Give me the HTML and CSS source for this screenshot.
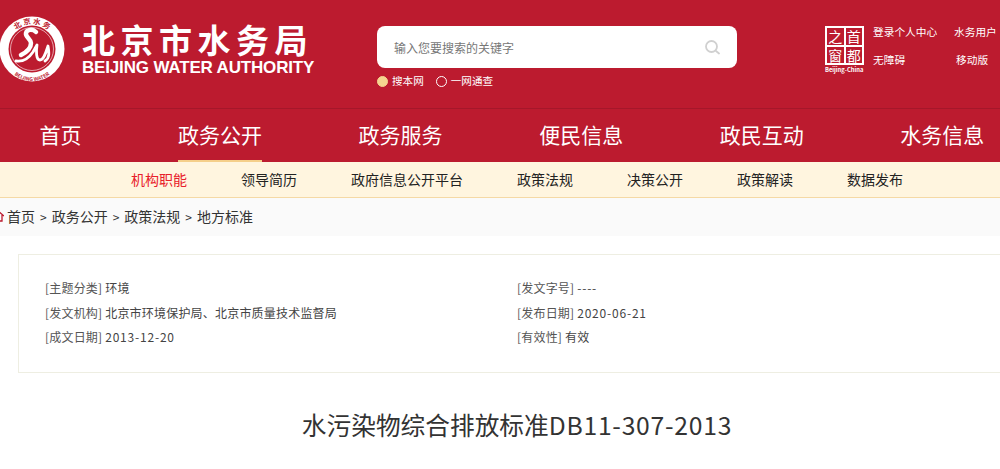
FILE: index.html
```html
<!DOCTYPE html>
<html>
<head>
    <title>水污染物综合排放标准DB11-307-2013</title>
    <meta charset="utf-8">
    <link rel="stylesheet" href="styles.css">
</head>
<body>
    <!-- Header -->
    <header class="top">
        <div class="brand">
            <svg class="brand-logo" viewBox="0 0 66 66" width="66" height="66">
                <circle cx="33" cy="33" r="32.500" fill="#fff"/>
                <circle cx="33" cy="33" r="23.500" fill="#bc1b2f"/>
                <circle cx="33" cy="33" r="21.500" fill="none" stroke="#fff" stroke-width="0.600"/>
                <path d="M37 16c-3-3-9-3-10 1-1 4 5 6 5 10 0 5-4 9-10 12" fill="none" stroke="#fff" stroke-width="4.500" stroke-linecap="round"/>
                <path d="M17 45C24 46 30 42 34 36L38 29C37 35 37 44 41 44 45 44 47 36 49 30 50 36 51 42 46 45" fill="none" stroke="#fff" stroke-width="2.800" stroke-linecap="round" stroke-linejoin="round"/>
                <path id="ringTop" d="M8 33a25 25 0 0 1 50 0" fill="none"/>
                <path id="ringBottom" d="M5 37a28 28 0 0 0 56 0" fill="none"/>
                <text class="ring-text"><textPath href="#ringTop" startOffset="50%" text-anchor="middle">北 京 水 务</textPath></text>
                <text class="ring-text small"><textPath href="#ringBottom" startOffset="50%" text-anchor="middle">BEIJING WATER</textPath></text>
            </svg>
            <div class="brand-text">
                <div class="brand-cn">北京市水务局</div>
                <div class="brand-en">BEIJING WATER AUTHORITY</div>
            </div>
        </div>

        <div class="search">
            <div class="search-box">
                <span class="search-hint">输入您要搜索的关键字</span>
                <svg viewBox="0 0 15 15" width="15" height="15" fill="none" stroke="#d0d0d0" stroke-width="1.800" stroke-linecap="round">
                    <circle cx="6.500" cy="6.500" r="5.500"/>
                    <line x1="11" y1="11" x2="14" y2="13.500"/>
                </svg>
            </div>
            <div class="search-scope">
                <span class="scope-item"><i class="dot on"></i>搜本网</span>
                <span class="scope-item"><i class="dot"></i>一网通查</span>
            </div>
        </div>

        <div class="capital">
            <div class="capital-grid">
                <span>之</span><span>首</span><span>窗</span><span>都</span>
            </div>
            <div class="capital-en">Beijing-China</div>
        </div>

        <div class="links">
            <a>登录个人中心</a>
            <a>水务用户</a>
            <a>无障碍</a>
            <a class="center">移动版</a>
        </div>
    </header>

    <!-- Main nav -->
    <nav class="nav">
        <a>首页</a>
        <a class="active">政务公开</a>
        <a>政务服务</a>
        <a>便民信息</a>
        <a>政民互动</a>
        <a>水务信息</a>
    </nav>

    <div class="subnav">
        <a class="active">机构职能</a>
        <a>领导简历</a>
        <a>政府信息公开平台</a>
        <a>政策法规</a>
        <a>决策公开</a>
        <a>政策解读</a>
        <a>数据发布</a>
    </div>

    <div class="crumbs">
        <svg class="home" viewBox="0 0 12 12" width="12" height="12" fill="none" stroke="#bc1b2f" stroke-width="1.300">
            <path d="M0 6l6-5 6 5M2 5v6h8V5"/>
        </svg>
        <span>首页</span><b>&gt;</b><span>政务公开</span><b>&gt;</b><span>政策法规</span><b>&gt;</b><span>地方标准</span>
    </div>

    <!-- Document info -->
    <section class="info">
        <div class="info-col">
            <p><em>[主题分类]</em> 环境</p>
            <p><em>[发文机构]</em> 北京市环境保护局、北京市质量技术监督局</p>
            <p><em>[成文日期]</em> <span class="num">2013-12-20</span></p>
        </div>
        <div class="info-col">
            <p><em>[发文字号]</em> <span class="num">----</span></p>
            <p><em>[发布日期]</em> <span class="num">2020-06-21</span></p>
            <p><em>[有效性]</em> 有效</p>
        </div>
    </section>

    <h1 class="title">水污染物综合排放标准<span class="title-code">DB11-307-2013</span></h1>
</body>
</html>
```

FILE: styles.css
```css
html {
    overflow: hidden;
}

body {
    margin: 0;
    width: 1000px;
    height: 469px;
    overflow: hidden;
    background-color: #fff;
    color: #333;
    font-family: "Noto Sans CJK SC", "Liberation Sans", sans-serif;
}

.top {
    display: flex;
    height: 108px;
    background-color: #bc1b2f;
    color: #fff;
    border-bottom: 1px solid #a5172a;
}

.brand {
    display: flex;
    width: 378px;
    flex-shrink: 0;
    margin-left: -1px;
    padding-top: 16px;
    box-sizing: border-box;
}

.brand-logo {
    flex-shrink: 0;
}

.ring-text {
    font-size: 7.500px;
    fill: #bc1b2f;
    font-weight: 700;
}

.ring-text.small {
    font-size: 5px;
}

.brand-text {
    margin-left: 17px;
    margin-top: 6px;
}

.brand-cn {
    font-size: 33px;
    font-weight: 700;
    line-height: 34px;
    letter-spacing: 5.500px;
    white-space: nowrap;
}

.brand-en {
    margin-top: 2px;
    font-family: "Liberation Sans", sans-serif;
    font-size: 17px;
    font-weight: 700;
    line-height: 20px;
    letter-spacing: -0.170px;
    white-space: nowrap;
}

.search {
    width: 360px;
    flex-shrink: 0;
    padding-top: 26px;
}

.search-box {
    display: flex;
    align-items: center;
    justify-content: space-between;
    height: 42px;
    padding: 0 17px;
    background-color: #fff;
    border-radius: 8px;
}

.search-hint {
    font-size: 12px;
    color: #777;
}

.search-scope {
    display: flex;
    gap: 12px;
    margin-top: 5px;
    font-size: 10.600px;
    line-height: 16px;
}

.scope-item {
    display: flex;
    align-items: center;
    gap: 4px;
}

.dot {
    width: 9px;
    height: 9px;
    border: 1px solid #fff;
    border-radius: 50%;
}

.dot.on {
    background-color: #f5d48f;
    border-color: #f5d48f;
}

.capital {
    width: 40px;
    flex-shrink: 0;
    margin-left: 88px;
    padding-top: 26px;
}

.capital-grid {
    display: grid;
    grid-template-columns: 1fr 1fr;
    width: 39px;
    height: 39px;
    border: 2px solid #fff;
    gap: 2px;
    background-color: #fff;
    box-sizing: border-box;
}

.capital-grid span {
    display: flex;
    align-items: center;
    justify-content: center;
    background-color: #bc1b2f;
    font-size: 14px;
    line-height: 1;
}

.capital-en {
    font-size: 5.800px;
    line-height: 9px;
    font-weight: 700;
    white-space: nowrap;
}

.links {
    display: grid;
    grid-template-columns: 81px 50px;
    grid-auto-rows: 16px;
    row-gap: 12px;
    margin-left: 8px;
    padding-top: 24px;
    font-size: 10.700px;
    line-height: 16px;
    align-content: start;
    white-space: nowrap;
}

.center {
    padding-left: 2px;
}

.nav {
    display: flex;
    gap: 96.600px;
    height: 53px;
    padding-left: 39.400px;
    background-color: #bc1b2f;
    color: #fff;
    font-size: 21px;
    white-space: nowrap;
}

.nav a {
    line-height: 51px;
    height: 53px;
    box-sizing: border-box;
}

.nav a.active {
    border-bottom: 2px solid #f5cf8a;
}

.subnav {
    display: flex;
    gap: 54px;
    height: 35px;
    padding-left: 131px;
    background-color: #fff5df;
    border-bottom: 1px solid #f5d9a5;
    color: #222;
    font-size: 14px;
    line-height: 34px;
}

.subnav a.active {
    color: #e8202a;
}

.crumbs {
    display: flex;
    align-items: center;
    height: 38px;
    padding-bottom: 2px;
    box-sizing: border-box;
    background-color: #fafafa;
    font-size: 14px;
    color: #333;
}

.crumbs .home {
    margin-left: -8px;
    margin-right: 3px;
}

.crumbs b {
    margin: 0 5px;
    font-weight: 400;
    font-size: 12px;
}

.info {
    display: flex;
    width: 998px;
    height: 119px;
    margin: 18px 0 0 18px;
    padding: 21px 0 0 26px;
    border: 1px solid #eeeee2;
    box-sizing: border-box;
    font-size: 12px;
    color: #444;
}

.info-col {
    width: 472px;
}

.info-col p {
    margin: 0;
    line-height: 24.500px;
    letter-spacing: 0.200px;
    white-space: nowrap;
}

.info-col em {
    font-style: normal;
    color: #555;
}

.num {
    letter-spacing: 0.800px;
}

.title {
    width: 998px;
    margin: 34px 0 0 18px;
    font-size: 24.700px;
    font-weight: 400;
    line-height: 34px;
    text-align: center;
    color: #333;
    white-space: nowrap;
}

.title-code {
    letter-spacing: 0.750px;
}
```
